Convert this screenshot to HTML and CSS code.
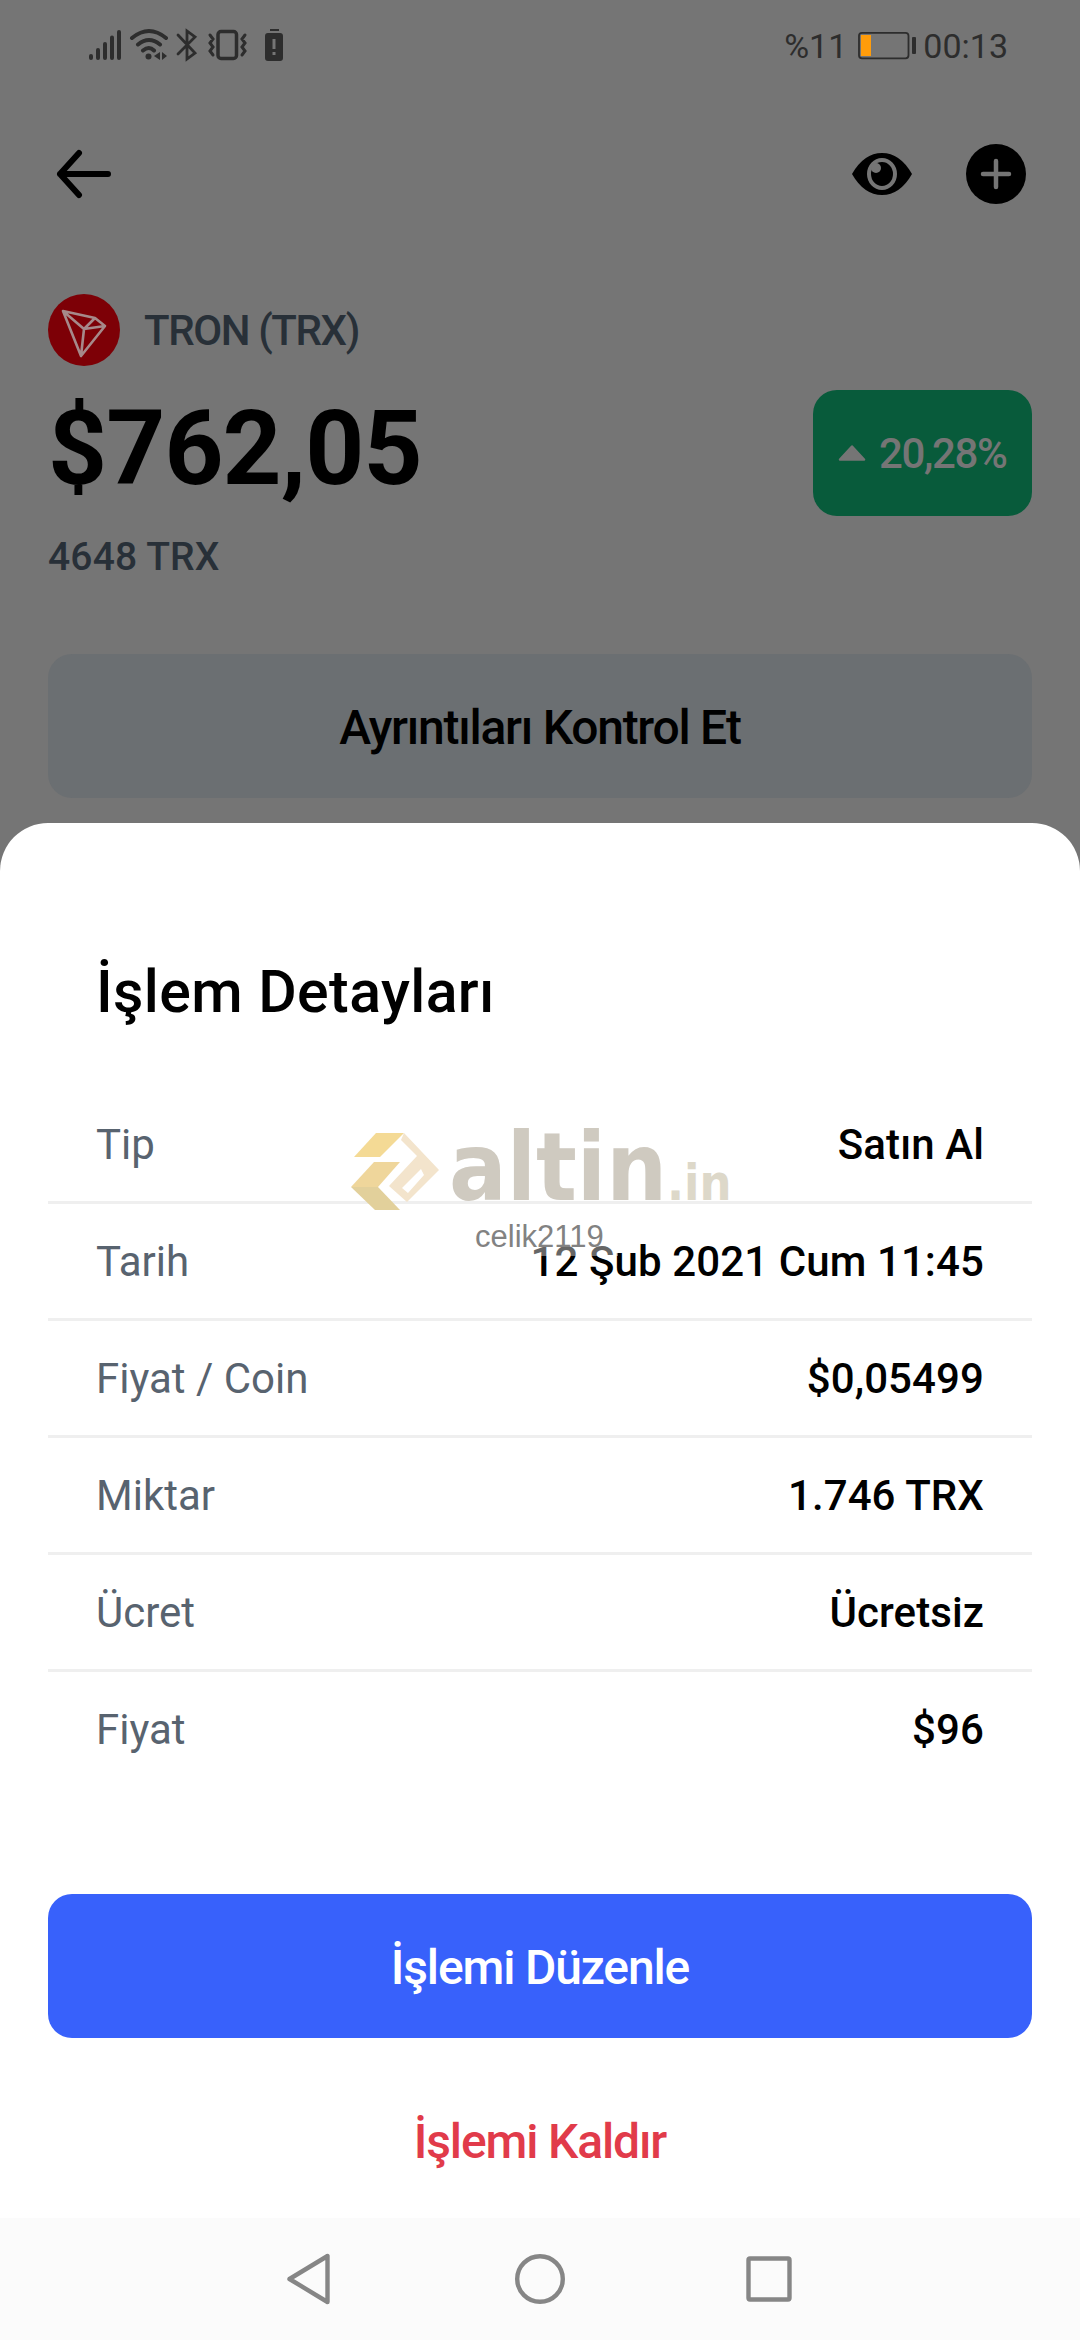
FILE: index.html
```html
<!DOCTYPE html>
<html lang="tr">
<head>
<meta charset="utf-8">
<title>İşlem Detayları</title>
<link rel="stylesheet" href="styles.css">
</head>
<body>
<div class="screen">
  <header class="status">
    <svg class="status-icons" width="200" height="40" viewBox="85 26 200 40">
      <g stroke="#2d2d2d" stroke-width="4" stroke-linecap="round" fill="none">
        <path d="M91 56v2M98 50v8M105 44v14M112 37.500v20.500M119 32v26"/>
        <path d="M132 38q17-14 34 0M138 44.500q11-9 22 0M143 50.500q6-5 11 0"/>
        <path stroke-width="2.800" d="M178 35l17 18-8 6V31l8 6-17 17"/>
        <rect x="218" y="31.500" width="18.500" height="27" rx="3" stroke-width="3.500"/>
        <path stroke-width="3" d="M210 35l3 4-3 4 3 4-3 4 3 4M245 35l-3 4 3 4-3 4 3 4-3 4"/>
      </g>
      <g fill="#2d2d2d"><circle cx="148.500" cy="56.500" r="3"/><path d="M160 52v8l-6-4zM162 52v8l5-4z"/><path d="M270 29h9v2h-9zM268 33h12q3 0 3 3v22q0 3-3 3h-12q-3 0-3-3V36q0-3 3-3z"/></g>
      <path d="M274 39v10M274 52v3" stroke="#757575" stroke-width="3"/>
    </svg>
    <div class="status-right">
      <span class="pct">%11</span>
      <svg width="60" height="30" viewBox="857 31 60 30"><rect x="859" y="32.800" width="49.500" height="25.500" rx="3" fill="none" stroke="#2d2d2d" stroke-width="1.800"/><path d="M861 35h10v21h-10z" fill="#ff9c0a"/><rect x="912" y="37" width="4" height="17" rx="1" fill="#2d2d2d"/></svg>
      <span class="time">00:13</span>
    </div>
  </header>
  <nav class="topbar">
    <svg width="56" height="50" viewBox="56 149 56 50" fill="none" stroke="#000" stroke-width="6" stroke-linecap="round" stroke-linejoin="round"><path d="M79 153L60 174l19 21M60 174h48"/></svg>
    <div class="actions">
      <svg width="60" height="42" viewBox="852 153 60 42"><path d="M852 174Q864 153 882 153t30 21q-12 21-30 21t-30-21z"/><ellipse cx="882" cy="174" rx="13" ry="14" fill="none" stroke="#757575" stroke-width="4"/><circle cx="876" cy="168" r="5" fill="#757575"/></svg>
      <svg width="60" height="60" viewBox="0 0 60 60"><circle cx="30" cy="30" r="30"/><path d="M17 30h26M30 17v26" stroke="#757575" stroke-width="4.500" stroke-linecap="round"/></svg>
    </div>
  </nav>
  <main class="asset">
    <div class="coin">
      <svg width="72" height="72" viewBox="0 0 72 72"><circle cx="36" cy="36" r="36" fill="#7d0006"/><path d="M15 17l32 7 10 8-24 30zM15 17l21 18 21-3M36 35l11-11M36 35l-3 27" fill="none" stroke="#a6898a" stroke-width="2.600" stroke-linejoin="round"/></svg>
      <span class="coin-name">TRON (TRX)</span>
    </div>
    <div class="value-row">
      <strong class="value">$762,05</strong>
      <div class="badge"><svg width="28" height="16" viewBox="0 0 28 16"><path d="M14 1.500L26 14.500H2z" fill="#757575" stroke="#757575" stroke-width="2.500" stroke-linejoin="round"/></svg><span>20,28%</span></div>
    </div>
    <div class="amount">4648 TRX</div>
    <div class="check"><span>Ayrıntıları Kontrol Et</span></div>
  </main>
  <section class="sheet">
    <h1>İşlem Detayları</h1>
    <dl class="rows">
      <div class="row"><dt>Tip</dt><dd>Satın Al</dd></div>
      <div class="row"><dt>Tarih</dt><dd>12 Şub 2021 Cum 11:45</dd></div>
      <div class="row"><dt>Fiyat / Coin</dt><dd>$0,05499</dd></div>
      <div class="row"><dt>Miktar</dt><dd>1.746 TRX</dd></div>
      <div class="row"><dt>Ücret</dt><dd>Ücretsiz</dd></div>
      <div class="row"><dt>Fiyat</dt><dd>$96</dd></div>
    </dl>
    <div class="edit">İşlemi Düzenle</div>
    <div class="remove">İşlemi Kaldır</div>
  </section>
  <footer class="sysnav">
    <svg width="506" height="52" viewBox="287 2253 506 52" fill="none" stroke="#868686" stroke-width="4.400" stroke-linejoin="round"><path d="M289.500 2279L327.500 2256v46z"/><circle cx="540" cy="2279" r="22.800"/><rect x="748.500" y="2258.500" width="41" height="41" rx="1.500"/></svg>
  </footer>
  <div class="watermark">
    <svg class="wm-logo" width="88" height="78" viewBox="0 0 88 78"><path d="M3 24L25 0h28L29 24z" fill="#f4da95"/><path d="M53 0L88 37 56 69 38 53 66 23 50 7zM70 36L51 55l6 5 16-18z" fill="#f3e4cc" fill-rule="evenodd"/><path d="M23 29h26L27 54H0z" fill="#efd69b"/><path d="M0 54h27l22 23H24z" fill="#e2d09b"/></svg>
    <span class="wm-name">altin</span><span class="wm-tld">.in</span>
    <span class="wm-user">celik2119</span>
  </div>
</div>
</body>
</html>
```
FILE: styles.css
```css
* { box-sizing: border-box; }
body { margin: 0; font-family: Roboto, sans-serif; color: #000; }
.screen { position: relative; width: 1080px; height: 2340px; overflow: hidden; background: #757575; display: flex; flex-direction: column; }
svg { display: block; flex: none; }
.status { height: 92px; padding: 0 72px 0 85px; display: flex; justify-content: space-between; align-items: center; color: #2d2d2d; }
.status-right { display: flex; align-items: center; font-size: 34px; }
.pct { margin-right: 10px; }
.time { margin-left: 6px; }
.topbar { height: 164px; padding: 0 54px 0 56px; display: flex; justify-content: space-between; align-items: center; }
.actions { display: flex; align-items: center; gap: 54px; }
.asset { height: 567px; padding: 38px 48px 0; }
.coin { display: flex; align-items: center; gap: 24px; font-size: 42px; font-weight: 500; color: #283038; letter-spacing: -1.4px; }
.value-row { height: 150px; display: flex; justify-content: space-between; align-items: center; }
.value { margin-top: 15px; font-size: 103px; line-height: 120px; font-weight: 700; letter-spacing: -.9px; }
.badge { width: 219px; height: 126px; margin-top: 24px; border-radius: 24px; background: #085b3b; color: #757575; display: flex; align-items: center; padding-left: 25px; gap: 13px; font-size: 42px; font-weight: 500; letter-spacing: -1.4px; }
.amount { height: 48px; margin-top: 17px; line-height: 48px; font-size: 39px; font-weight: 500; color: #283038; letter-spacing: .15px; }
.check { height: 144px; margin-top: 73px; padding-top: 2px; border-radius: 24px; background: #6b6f72; display: flex; align-items: center; justify-content: center; font-size: 48px; font-weight: 500; letter-spacing: -1.25px; }
.sheet { height: 1395px; padding: 0 48px; background: #fff; border-radius: 48px 48px 0 0; }
h1 { margin: 0; padding: 134px 48px 0; height: 264px; font-size: 59px; line-height: 70px; font-weight: 500; letter-spacing: .4px; }
.rows { margin: 0; }
.row { height: 117px; padding: 0 48px; border-bottom: 3px solid #efefef; display: flex; justify-content: space-between; align-items: center; font-size: 42px; }
.row:last-child { border-color: transparent; }
dt { color: #58636f; }
dd { margin: 0; font-weight: 500; letter-spacing: .1px; }
.edit { height: 144px; margin-top: 105px; padding-top: 2px; border-radius: 24px; background: #3861fb; color: #fff; display: flex; align-items: center; justify-content: center; font-size: 48px; font-weight: 500; letter-spacing: -1.15px; }
.remove { height: 144px; margin-top: 30px; padding-top: 3px; display: flex; align-items: center; justify-content: center; font-size: 48px; font-weight: 500; letter-spacing: -1.15px; color: #e13b4a; }
.sysnav { height: 122px; background: #fbfbfb; display: flex; align-items: center; justify-content: center; }
.watermark { position: absolute; left: 350px; top: 1120px; width: 384px; height: 137px; }
.watermark > * { position: absolute; white-space: nowrap; }
.wm-logo { left: 1px; top: 13px; }
.wm-name, .wm-tld { font-family: "DejaVu Sans", sans-serif; font-weight: 700; line-height: 1; transform: scaleX(.9); transform-origin: 0 0; }
.wm-name { left: 99px; top: 0; font-size: 95px; color: #cfcac0; }
.wm-tld { left: 317px; top: 38px; font-size: 50px; color: #ddd8c9; }
.wm-user { left: 124px; top: 101px; width: 144px; height: 35px; padding-left: 1px; font: 31px/31px "Liberation Sans", sans-serif; color: #828282; background: rgba(255, 255, 255, .4); }
```
